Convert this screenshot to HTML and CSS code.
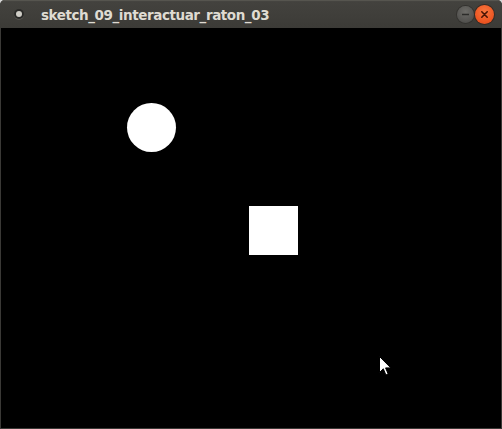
FILE: index.html
```html
<!DOCTYPE html>
<html>
<head>
<meta charset="utf-8">
<link rel="stylesheet" href="styles.css">
</head>
<body>
<div class="window">
  <div class="titlebar">
    <span class="app-icon"><span class="app-dot"></span></span>
    <span class="title">sketch_09_interactuar_raton_03</span>
    <span class="buttons">
      <span class="btn btn-min"><svg width="17" height="17" viewBox="0 0 17 17"><line x1="5" y1="8.5" x2="12" y2="8.5" stroke="#2c2c2a" stroke-width="1.5"/></svg></span>
      <span class="btn btn-close"><svg width="19" height="19" viewBox="0 0 19 19"><path d="M6.8 6.8 L12.2 12.2 M12.2 6.8 L6.8 12.2" stroke="#4a1505" stroke-width="1.6" stroke-linecap="round"/></svg></span>
    </span>
  </div>
  <div class="canvas">
    <div class="shape circle"></div>
    <div class="shape square"></div>
    <svg class="cursor" width="14" height="22" viewBox="0 0 14 22"><path d="M0.5 0.5 L0.5 16.5 L4.3 12.8 L6.9 19 L9.2 18 L6.6 11.9 L11.8 11.9 Z" fill="#fff" stroke="#000" stroke-width="1"/></svg>
  </div>
</div>
</body>
</html>
```
FILE: styles.css
```css
html, body {
  margin: 0;
  padding: 0;
  background: #d8d8d8;
}
.window {
  width: 502px;
  height: 429px;
  display: flex;
  flex-direction: column;
  overflow: hidden;
  border-radius: 5px 5px 0 0;
  background: #3a3936;
}
.titlebar {
  height: 28px;
  flex: none;
  display: flex;
  align-items: center;
  background: linear-gradient(#4a4945 0px, #43423e 2px, #3c3b37 28px);
  box-shadow: inset 0 1px 0 #56554f;
  position: relative;
}
.app-icon {
  width: 10px;
  height: 10px;
  margin-left: 14px;
  border-radius: 50%;
  background: #2a2a28;
  display: flex;
  align-items: center;
  justify-content: center;
  box-shadow: 0 1px 0 #55544f;
}
.app-dot {
  width: 6px;
  height: 6px;
  border-radius: 50%;
  background: #cfcdc6;
}
.title {
  margin-left: 17px;
  font-family: "DejaVu Sans", sans-serif;
  font-weight: bold;
  font-size: 13.5px;
  letter-spacing: -0.43px;
  color: #dfdbd2;
  line-height: 28px;
  padding-top: 1px;
}
.buttons {
  margin-left: auto;
  margin-right: 8px;
  display: flex;
  align-items: center;
  gap: 1px;
}
.btn {
  display: flex;
  border-radius: 50%;
}
.btn-min {
  width: 17px;
  height: 17px;
  background: radial-gradient(circle at 50% 35%, #6d6c68, #53524f 70%, #44433f);
  box-shadow: 0 0 0 1px #33322f;
}
.btn-close {
  width: 19px;
  height: 19px;
  background: radial-gradient(circle at 50% 35%, #f7773f, #ee5622 65%, #d9461a);
  box-shadow: 0 0 0 1px #3a2a22;
}
.canvas {
  flex: 1;
  margin: 0 1px 1px 1px;
  background: #000;
  position: relative;
}
.shape {
  position: absolute;
  background: #fff;
}
.circle {
  left: 126px;
  top: 75px;
  width: 49px;
  height: 49px;
  border-radius: 50%;
}
.square {
  left: 248px;
  top: 178px;
  width: 49px;
  height: 49px;
}
.cursor {
  position: absolute;
  left: 378px;
  top: 328px;
}
```
